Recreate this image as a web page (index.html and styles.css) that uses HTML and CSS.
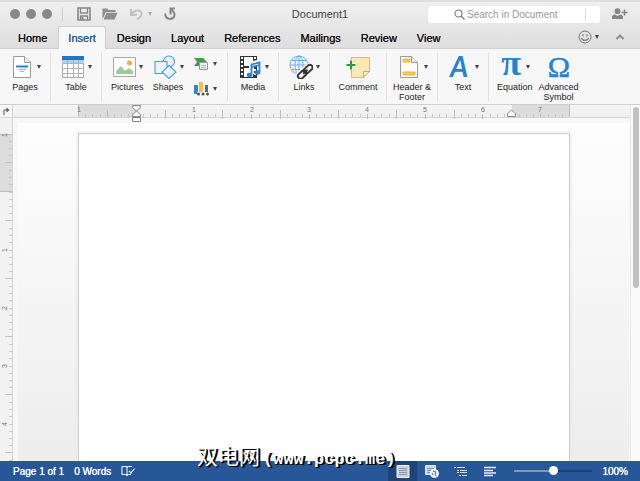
FILE: index.html
```html
<!DOCTYPE html>
<html lang="en">
<head>
<meta charset="utf-8">
<title>Document1</title>
<link rel="stylesheet" href="styles.css">
</head>
<body>
<div class="app">
  <header class="chrome">
    <div class="titlebar">
      <div class="quick">
        <div class="lights">
          <button class="light" aria-label="Close"></button>
          <button class="light" aria-label="Minimize"></button>
          <button class="light" aria-label="Zoom"></button>
        </div>
        <div class="quick-tools">
          <button aria-label="Save"><svg width="14" height="14" viewBox="0 0 14 14"><path d="M1 1h12v12H1z" fill="none" stroke="#858585" stroke-width="1.6"/><path d="M3.5 1v5h7V1M3.5 13V9h7v4" fill="none" stroke="#858585" stroke-width="1.3"/><path d="M4.5 10h2v3h-2z" fill="#858585"/></svg></button>
          <button aria-label="Open"><svg width="16" height="14" viewBox="0 0 16 14"><path d="M.5 12V1.500h5l1 1.500h7V5H4z" fill="#8e8e8e"/><path d="M1.500 12.500 4.500 5.800H15.500L12.500 12.500z" fill="#8e8e8e"/></svg></button>
          <button class="undo" aria-label="Undo"><svg width="14" height="14" viewBox="0 0 14 14"><path d="M2 2v6h6M2.500 7.500C6 2 12.500 2.500 12.500 7c0 2.500-2 4-4.500 5.500" fill="none" stroke="#c2c2c2" stroke-width="2"/></svg><i class="arrow faded"></i></button>
          <button aria-label="Repeat"><svg width="14" height="14" viewBox="0 0 14 14"><path d="M2.300 6.500C1.500 13.500 11.800 13.500 11.500 7.500 11.300 5 9.500 3.500 8 2.500" fill="none" stroke="#858585" stroke-width="2"/><path d="M6.500 1.500H12M7.500 1.500v6" fill="none" stroke="#858585" stroke-width="2"/></svg></button>
        </div>
      </div>
      <h1 class="title">Document1</h1>
      <div class="title-right">
        <label class="search">
          <svg width="11" height="11" viewBox="0 0 11 11"><circle cx="4.500" cy="4.500" r="3.500" fill="none" stroke="#777" stroke-width="1.100"/><path d="M7 7l3.500 3.500" stroke="#777" stroke-width="1.300"/></svg>
          <input type="search" placeholder="Search in Document" aria-label="Search in Document">
          <span class="search-rule"></span>
        </label>
        <button aria-label="Share"><svg width="16" height="12" viewBox="0 0 16 12"><circle cx="5.500" cy="3.200" r="2.900" fill="#858585"/><path d="M0 11V9Q0 7 3 6.500L5.500 8 8 6.500Q11 7 11 9v2z" fill="#858585"/><path d="M12.500 1.500v6M9.500 4.500h6" stroke="#858585" stroke-width="1.500"/></svg></button>
      </div>
    </div>
    <nav class="tabs">
      <button class="tab">Home</button>
      <button class="tab selected">Insert</button>
      <button class="tab">Design</button>
      <button class="tab">Layout</button>
      <button class="tab">References</button>
      <button class="tab">Mailings</button>
      <button class="tab">Review</button>
      <button class="tab">View</button>
      <div class="tab-tools">
        <button aria-label="Feedback"><svg width="14" height="14" viewBox="0 0 14 14"><circle cx="7" cy="7" r="6" fill="none" stroke="#777"/><path d="M5 4v2.500M9 4v2.500M3.500 8c1 3.200 6 3.200 7 0" fill="none" stroke="#777" stroke-width="1.100"/></svg><i class="arrow"></i></button>
        <button aria-label="Collapse ribbon"><svg width="10" height="6" viewBox="0 0 10 6"><path d="M1.500 5 5 1.500 8.500 5" fill="none" stroke="#858585" stroke-width="1.800"/></svg></button>
      </div>
    </nav>
  </header>

  <section class="ribbon" aria-label="Insert">
    <div class="group">
      <button class="tool"><span class="face"><svg width="24" height="24" viewBox="0 0 24 24"><path d="M3.500 1.500h11l6 6v15h-17z" fill="#fff" stroke="#999"/><path d="M14.500 1.500v6h6" fill="#eee" stroke="#999"/><path d="M6 11.500h12" stroke="#2d7fd0" stroke-width="2"/><path d="M8 14.500h8M10 16.500h4" stroke="#8fbce8"/></svg><i class="arrow"></i></span>Pages</button>
    </div>
    <div class="group">
      <button class="tool"><span class="face"><svg width="24" height="24" viewBox="0 0 24 24"><path d="M1.500 2.500h21v20h-21z" fill="#fff" stroke="#aaa"/><path d="M1 1h22v4H1z" fill="#2d72bc"/><path d="M1 5h22v3H1z" fill="#a9d1f3"/><path d="M1 8.500h22M1 13.500h22M1 18.500h22M6.500 5v17M12.500 5v17M17.500 5v17" stroke="#b2b2b2" fill="none"/></svg><i class="arrow"></i></span>Table</button>
    </div>
    <div class="group wide">
      <button class="tool"><span class="face"><svg width="24" height="24" viewBox="0 0 24 24"><path d="M1.500 2.500h22v19h-22z" fill="#fff" stroke="#a7a7a7"/><path d="M4 19v-3l5-5 4 5 4-3 4 3v3z" fill="#9dca9c"/><circle cx="17.500" cy="8" r="2.500" fill="#f2ae37"/></svg><i class="arrow"></i></span>Pictures</button>
      <button class="tool"><span class="face"><svg width="24" height="24" viewBox="0 0 24 24"><g fill="#e9f3fd" stroke="#4e9be0" stroke-width="1.100"><circle cx="16" cy="6.500" r="5.500"/><path d="M2 6.500h12v12H2z"/><path d="M16 10.500l7 6.500-7 6.500-7-6.500z"/></g></svg><i class="arrow"></i></span>Shapes</button>
      <div class="stack">
        <button class="mini" aria-label="SmartArt"><svg width="17" height="14" viewBox="0 0 17 14"><path d="M1 1h9l4 4-4 4H1l3-4z" fill="#3f9e47"/><path d="M6.500 5.500h8v7h-8z" fill="#eee" stroke="#999"/><path d="M8 8.500h5M8 10.500h5" stroke="#bbb"/></svg><i class="arrow"></i></button>
        <button class="mini" aria-label="Chart"><svg width="17" height="15" viewBox="0 0 17 15"><path d="M1 4h4v9H1z" fill="#3684cf"/><path d="M6 1h4v11H6z" fill="#f3bd4c"/><path d="M12 4h3v8h-3z" fill="#666"/><path d="M4 12.500h12" stroke="#eee" stroke-width="3"/><g fill="#555"><circle cx="5.500" cy="13" r="1.500"/><circle cx="10" cy="13" r="1.500"/><circle cx="14.500" cy="13" r="1.500"/></g></svg><i class="arrow"></i></button>
      </div>
    </div>
    <div class="group">
      <button class="tool"><span class="face"><svg width="24" height="24" viewBox="0 0 24 24"><path d="M2 1h17v22H2z" fill="#333"/><path d="M6 2h9v9H6zM6 13h9v9H6z" fill="#fff"/><path d="M4 2v20M17 2v20" stroke="#fff" stroke-width="2" stroke-dasharray="2 2"/><path d="M13.500 19V9l8-2v10" fill="none" stroke="#fff" stroke-width="5"/><path d="M13.500 19.500V9.500l8-2V17M13.500 12l8-2" fill="none" stroke="#257fd3" stroke-width="1.800"/><ellipse cx="11.500" cy="20" rx="2.700" ry="2.200" fill="#257fd3"/><ellipse cx="19.500" cy="17.500" rx="2.700" ry="2.200" fill="#257fd3"/></svg><i class="arrow"></i></span>Media</button>
    </div>
    <div class="group">
      <button class="tool"><span class="face"><svg width="24" height="24" viewBox="0 0 24 24"><g fill="none" stroke="#69aee8"><circle cx="10" cy="10" r="9" fill="#eff7fe"/><ellipse cx="10" cy="10" rx="4" ry="9"/><path d="M10 1v18M1 10h18M2.500 5.500h15M2.500 14.500h15"/></g><g transform="rotate(-43 16 17)" fill="none"><path d="M10 14h5a3 3 0 0 1 0 6h-5a3 3 0 0 1 0-6zM17 14h5a3 3 0 0 1 0 6h-5a3 3 0 0 1 0-6z" stroke="#f6f6f6" stroke-width="4"/><path d="M10 14.300h4.500a2.700 2.700 0 0 1 0 5.400H10a2.700 2.700 0 0 1 0-5.400zM18 14.300h4.500a2.700 2.700 0 0 1 0 5.400H18a2.700 2.700 0 0 1 0-5.400zM13.500 17h6" stroke="#333" stroke-width="1.900"/></g></svg><i class="arrow"></i></span>Links</button>
    </div>
    <div class="group comment">
      <button class="tool"><span class="face"><svg width="24" height="24" viewBox="0 0 24 24"><path d="M5.500 2.500h18v14l-6 6h-12z" fill="#fae8b4" stroke="#d4bd7d"/><path d="M17.500 22v-5.500h6z" fill="#fff4ce" stroke="#c9ad64"/><path d="M5 5v10M0 10h10" stroke="#f6f6f6" stroke-width="4"/><path d="M5 5.500v9M.5 10h9" stroke="#2a9a3c" stroke-width="2.200"/></svg></span>Comment</button>
    </div>
    <div class="group">
      <button class="tool"><span class="face"><svg width="24" height="24" viewBox="0 0 24 24"><path d="M3.500 1.500h11l6 6v15h-17z" fill="#fff" stroke="#999"/><path d="M14.500 1.500v6h6" fill="#eee" stroke="#999"/><path d="M6 4h7v3H6zM6 17h12v3H6z" fill="#f9ca55" stroke="#edb43d"/></svg><i class="arrow"></i></span>Header &amp;<br>Footer</button>
    </div>
    <div class="group">
      <button class="tool"><span class="face"><svg class="letter" width="24" height="24" viewBox="0 0 24 24"><text class="glyph slanted" x="11" y="22" text-anchor="middle">A</text></svg><i class="arrow"></i></span>Text</button>
    </div>
    <div class="group last">
      <button class="tool"><span class="face"><svg class="letter" width="24" height="24" viewBox="0 0 24 24"><text class="glyph pi" x="12" y="20" text-anchor="middle">π</text></svg><i class="arrow"></i></span>Equation</button>
      <button class="tool"><span class="face"><svg class="letter" width="24" height="24" viewBox="0 0 24 24"><text class="glyph omega" x="12" y="22" text-anchor="middle">Ω</text></svg></span>Advanced<br>Symbol</button>
    </div>
  </section>

  <main class="editor">
    <button class="tab-stop" aria-label="Tab stop"><svg width="8" height="9" viewBox="0 0 8 9"><path d="M2 8V3h3" fill="none" stroke="#555"/><path d="M4.500.5 7.500 3l-3 2.500z" fill="#555"/></svg></button>
    <div class="ruler-h">
      <svg width="492" height="19" viewBox="0 0 492 19">
        <path d="M0 0h58v12H0zM434 0h58v12h-58z" fill="#dcdcdc"/>
        <path d="M7.500 9v3M14.500 9v3M22.500 9v3M36.500 9v3M43.500 9v3M50.500 9v3M65.500 9v3M72.500 9v3M79.500 9v3M94.500 9v3M101.500 9v3M108.500 9v3M123.500 9v3M130.500 9v3M137.500 9v3M152.500 9v3M159.500 9v3M166.500 9v3M181.500 9v3M188.500 9v3M195.500 9v3M209.500 9v3M217.500 9v3M224.500 9v3M238.500 9v3M246.500 9v3M253.500 9v3M267.500 9v3M274.500 9v3M282.500 9v3M296.500 9v3M303.500 9v3M311.500 9v3M325.500 9v3M332.500 9v3M339.500 9v3M354.500 9v3M361.500 9v3M368.500 9v3M383.500 9v3M390.500 9v3M397.500 9v3M412.500 9v3M419.500 9v3M426.500 9v3M441.500 9v3M448.500 9v3M455.500 9v3M470.500 9v3M477.500 9v3M484.500 9v3" stroke="#c6c6c6"/>
        <path d="M29.500 5v7M87.500 5v9M144.500 5v9M202.500 5v9M260.500 5v9M318.500 5v9M376.500 5v9M116.500 9v5M173.500 9v5M231.500 9v5M289.500 9v5M347.500 9v5M404.500 9v5M462.500 9v3" stroke="#bbb"/>
        <path d="M.5 0v12M491.500 0v12" stroke="#bdbdbd"/>
        <g class="num" text-anchor="middle"><text x="1" y="7">1</text><text x="116" y="7">1</text><text x="174" y="7">2</text><text x="231" y="7">3</text><text x="289" y="7">4</text><text x="347" y="7">5</text><text x="405" y="7">6</text><text x="462" y="7">7</text></g>
        <g fill="#fff" stroke="#888"><path d="M54.500.5h8v2l-4 3.500-4-3.500zM54.500 11.500v-2l4-3.500 4 3.500v2zM54.500 12.500h8v4h-8z"/><path d="M429.500 11.500v-3l4-3.500 4 3.500v3z"/></g>
      </svg>
    </div>
    <div class="ruler-v">
      <svg width="13" height="480" viewBox="0 0 13 480">
        <defs><pattern id="inch-v" x="0" y="74" width="13" height="58" patternUnits="userSpaceOnUse"><path d="M9 7.500h3M9 14.500h3M9 21.500h3M9 36.500h3M9 43.500h3M9 50.500h3M9 .5h3" stroke="#c8c8c8"/><path d="M5 28.500h7" stroke="#c3c3c3"/></pattern></defs>
        <path d="M0 16h13v58H0z" fill="#dcdcdc"/>
        <path d="M0 16h13v464H0z" fill="url(#inch-v)"/>
        <path d="M0 16.500h12M0 73.500h12" stroke="#bdbdbd"/>
        <g class="num" text-anchor="middle"><text transform="translate(7 17) rotate(-90)">1</text><text transform="translate(7 132) rotate(-90)">1</text><text transform="translate(7 190) rotate(-90)">2</text><text transform="translate(7 248) rotate(-90)">3</text><text transform="translate(7 306) rotate(-90)">4</text></g>
      </svg>
    </div>
    <div class="canvas"><div class="desk"><article class="page" contenteditable="true" spellcheck="false" aria-label="Document page"></article></div></div>
    <div class="scroll"><div class="thumb"></div></div>
  </main>

  <footer class="status">
    <button>Page 1 of 1</button>
    <button>0 Words</button>
    <button aria-label="Proofing"><svg width="14" height="12" viewBox="0 0 14 12"><path d="M6 2.500 5 1.500H1v8h4l1 1 1-1h3M6 2v9M6 2.500l1-1h4" fill="none" stroke="#e5edf7" stroke-width="1.100"/><path d="M8 6l2 2 3.500-4.500" fill="none" stroke="#e5edf7" stroke-width="1.200"/></svg></button>
    <div class="views">
      <button class="view current" aria-label="Print layout"><svg width="14" height="13" viewBox="0 0 14 13"><path d="M1 .5h12v12H1z" fill="#c9cfdb" stroke="#eef2f8"/><path d="M3 3.500h8M3 5.500h8M3 7.500h8M3 9.500h8" stroke="#8f98aa"/></svg></button>
      <button class="view" aria-label="Web layout"><svg width="14" height="13" viewBox="0 0 14 13"><path d="M.5.5h10v9H.5z" fill="#c9d5e7" stroke="#dfe7f2"/><path d="M2 3.500h7M2 5.500h7M2 7.500h5" stroke="#7e98bf"/><circle cx="9.500" cy="8.500" r="4" fill="#e8eef7" stroke="#fff"/><path d="M8 6l3 1-1 2 1 2M7 8l1 2" fill="none" stroke="#4b74ae"/></svg></button>
      <button class="view" aria-label="Outline"><svg width="14" height="11" viewBox="0 0 14 11"><path d="M0 1.500h2M3 1.500h8M3 4.500h2M6 4.500h7M3 6.500h2M6 6.500h7M5 9.500h2M8 9.500h5" stroke="#d5dfed" stroke-width="1.200"/></svg></button>
      <button class="view" aria-label="Draft"><svg width="12" height="11" viewBox="0 0 12 11"><path d="M0 1.500h12M0 4.500h9M0 7h12M0 9.500h9" stroke="#e5ebf4" stroke-width="1.300"/></svg></button>
    </div>
    <input class="zoom" type="range" min="0" max="100" value="50" aria-label="Zoom">
    <button class="percent">100%</button>
    <div class="watermark">双电网<span>(www.pcpc.me)</span></div>
  </footer>
</div>
</body>
</html>
```
FILE: styles.css
```css
* { box-sizing: border-box; }
body {
  margin: 0;
  font-family: "Liberation Sans", "Noto Sans CJK SC", sans-serif;
  font-size: 11px;
  color: #222;
}
button {
  margin: 0;
  padding: 0;
  border: 0;
  background: none;
  font: inherit;
  color: inherit;
}
svg { display: block; flex: none; }
.app { display: flex; flex-direction: column; height: 100vh; }

.chrome {
  border-top: 2px solid #dedede;
  border-bottom: 1px solid #d0d0d0;
  background: linear-gradient(#efefef, #dedede);
}
.titlebar {
  display: grid;
  grid-template-columns: 1fr auto 1fr;
  align-items: center;
  height: 24px;
}
.quick, .lights, .quick-tools, .title-right, .search, .undo { display: flex; align-items: center; }
.lights { gap: 6px; padding: 0 10px; border-right: 1px solid #d2d2d2; height: 14px; }
.light { width: 10px; height: 10px; border-radius: 50%; background: #88888c; }
.quick-tools { gap: 11px; padding-left: 14px; }
.undo { gap: 5px; }
.title { margin: 0; font-size: 11px; font-weight: normal; line-height: 24px; color: #444; }
.title-right { justify-content: flex-end; gap: 12px; padding-right: 12px; }
.search {
  width: 172px;
  height: 17px;
  padding: 0 14px 0 26px;
  gap: 2px;
  border-radius: 3px;
  background: #fff;
}
.search input {
  flex: 1;
  min-width: 0;
  padding: 0;
  border: 0;
  outline: 0;
  background: none;
  font: 10px "Liberation Sans", sans-serif;
}
.search input::placeholder { color: #999; }
.search-rule { width: 1px; height: 13px; background: #ddd; }
.arrow {
  width: 4px;
  border: 2px solid transparent;
  border-top: 4px solid #444;
  border-bottom: 0;
  flex: none;
}
.faded { border-top-color: #aaa; }

.tabs { display: flex; gap: 2px; height: 22px; padding-left: 9px; }
.tab {
  padding: 0 9px;
  line-height: 20px;
  border: 1px solid transparent;
  border-width: 1px 0 0;
  color: #111;
  text-shadow: 0 0 0 currentColor;
}
.tab.selected {
  margin-bottom: -1px;
  padding-bottom: 1px;
  border: 1px solid #cfcfcf;
  border-bottom: 0;
  border-radius: 3px 3px 0 0;
  background: #f8f8f8;
  color: #2b579a;
}
.tab-tools { display: flex; gap: 16px; margin-left: auto; padding-right: 15px; }
.tab-tools button { display: flex; align-items: center; gap: 3px; }

.ribbon {
  display: flex;
  height: 56px;
  padding: 3px 0;
  border-bottom: 1px solid #cfcfcf;
  background: #f7f7f7;
}
.group {
  display: flex;
  justify-content: center;
  width: 51px;
  border-right: 1px solid #e2e2e2;
}
.wide { width: 126px; gap: 9px; justify-content: flex-start; padding-left: 9px; }
.comment { width: 57px; }
.last { border: 0; width: auto; padding-left: 8px; gap: 6px; }
.tool {
  display: flex;
  flex-direction: column;
  align-items: center;
  height: 50px;
  padding-top: 3px;
  font-size: 9px;
  line-height: 10px;
}
.face { display: flex; align-items: center; justify-content: center; gap: 3px; margin-bottom: 3px; }
.stack { display: flex; flex-direction: column; gap: 10px; padding-top: 5px; }
.mini { display: flex; align-items: center; gap: 3px; }
.letter { overflow: visible; }
.glyph { fill: #2682d5; }
.slanted { font: italic bold 28px Lato, sans-serif; }
.pi { font: bold 36px "Liberation Serif", serif; }
.omega { font: 30px "Liberation Serif", serif; stroke: #2682d5; stroke-width: 0.5; }

.editor {
  flex: 1;
  min-height: 0;
  display: grid;
  grid-template: 13px minmax(0, 1fr) / 13px minmax(0, 1fr) 10px;
  background: #f7f7f7;
}
.tab-stop {
  display: grid;
  place-items: center;
  border-right: 1px solid #d5d5d5;
  border-bottom: 1px solid #d5d5d5;
}
.ruler-h {
  display: flex;
  justify-content: center;
  padding-left: 5px;
  border-bottom: 1px solid #d5d5d5;
  background: linear-gradient(#f6f6f6, #eee);
}
.ruler-h svg { position: relative; z-index: 1; overflow: visible; }
.ruler-v { overflow: hidden; border-right: 1px solid #d5d5d5; background: #f2f2f2; grid-row: 2; }
.num { font: 7px "Liberation Sans", sans-serif; fill: #777; }
.canvas { grid-row: 2; padding: 5px 1px 0 5px; min-height: 0; }
.desk {
  display: flex;
  justify-content: center;
  height: 100%;
  padding-top: 10px;
  overflow: hidden;
  background: linear-gradient(#fefefe, #ededed);
}
.page {
  width: 492px;
  border: 1px solid #cdcdcd;
  border-bottom: 0;
  outline: 0;
  background: #fff;
  box-shadow: 0 0 4px #e2e2e2;
}
.scroll {
  grid-column: 3;
  grid-row: 1 / 3;
  padding: 2px 1px 0 2px;
  border-left: 1px solid #e8e8e8;
  background: #fafafa;
}
.thumb { height: 51%; border-radius: 3px; background: #c1c1c1; }

.status {
  position: relative;
  display: flex;
  align-items: center;
  gap: 10px;
  height: 20px;
  padding: 0 12px 0 13px;
  background: #285797;
  color: #fff;
  font-size: 10px;
}
.status > button { text-shadow: 0 0 0 currentColor; }
.views { display: flex; align-self: stretch; margin-left: auto; }
.view { display: grid; place-items: center; width: 29px; }
.current { background: #1f4577; }
.zoom {
  appearance: none;
  width: 78px;
  height: 10px;
  margin: 0;
  background: none;
}
.zoom::-webkit-slider-runnable-track { height: 2px; background: linear-gradient(90deg, #8b96a8 50%, #1d3f6e 50%); }
.zoom::-webkit-slider-thumb {
  appearance: none;
  width: 9px;
  height: 9px;
  margin-top: -4px;
  border-radius: 50%;
  background: #fff;
}
.watermark {
  position: absolute;
  left: 197px;
  bottom: 12px;
  display: flex;
  align-items: baseline;
  gap: 3px;
  font: 21px/28px "Noto Sans CJK SC", sans-serif;
  color: #fff;
  text-shadow: 1px 1px 0 #000, 2px 1px 0 #000;
  white-space: nowrap;
  pointer-events: none;
}
.watermark span { font: bold 17px "Liberation Mono", monospace; }
```
